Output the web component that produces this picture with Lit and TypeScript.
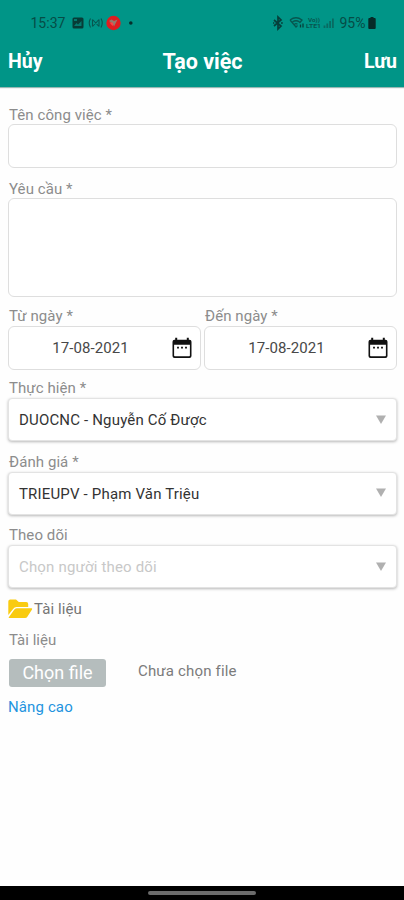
import { LitElement, html, css } from "lit";
import { customElement, property } from "lit/decorators.js";

const calendarIcon = html`<svg width="20" height="22" viewBox="0 0 20 22">
  <path d="M3.200 .7h2v2h9.600v-2h2v2h.7q2 0 2 2v14.300q0 2-2 2h-15q-2 0-2-2V4.700q0-2 2-2h.7zM2.100 7.800v10.600q0 .8.800.8h14.200q.8 0 .8-.8V7.800z" fill="#111" fill-rule="evenodd"/>
  <path d="M5 9.800h2v1.700H5zM9 9.800h2v1.700H9zM13 9.800h2v1.700h-2z" fill="#222"/>
</svg>`;

const folderIcon = html`<svg width="25" height="20" viewBox="0 0 25 20">
  <path d="M.3 16V2.500Q.3.500 2.300.500H8l2.800 2.500h7.400q2 0 2 2v3L8.500 8q-2 0-3.400 1.900z" fill="#f9cb10"/>
  <path d="M.8 18.200 6 11q1-1.700 2.700-1.700h14.700q1.300 0 .6 1.200l-4.500 7q-.9 1.600-2.500 1.600H1.300q-.9 0-.5-.9z" fill="#f9cb10"/>
</svg>`;

@customElement("status-bar")
export class StatusBar extends LitElement {
  static styles = css`
    :host { display: flex; height: 46px; box-sizing: border-box; padding: 14px 28px 14px 30.500px; color: #064c46; font-size: 14px; line-height: 18px; justify-content: space-between; }
    .side { display: flex; align-items: center; height: 18px; }
    .time { width: 41px; }
    .percent { margin-left: 5px; width: 28.500px; }
    svg { display: block; flex: none; }
  `;
  render() {
    return html`
      <div class="side">
        <span class="time">15:37</span>
        <svg width="62" height="18" viewBox="0 0 62 18">
          <path d="M2 3.500h8q1.500 0 1.500 1.500v8q0 1.500-1.500 1.500H2Q.5 14.500.5 13V5Q.5 3.500 2 3.500z" fill="#073c37"/>
          <path d="M2 5h3v2H2zM2 12l2.500-3L6 10.500 9.500 7v5z" fill="#05796e"/>
          <g fill="none" stroke="#07564f" stroke-width="1.100">
            <path d="M18.500 4.500Q16 9 18.500 13.500M29 4.500q2.500 4.500 0 9M20.500 5.500l6.500 7M27 5.500l-6.500 7M20.500 5.500v7M27 5.500v7"/>
          </g>
          <circle cx="41.500" cy="9" r="7.200" fill="#df1d20"/>
          <path d="M37 7l2.500-1.500L42 7l3.500-1.500-2 4-1.500 3-1.500-3z" fill="#96796b"/>
          <path d="M37.500 8.500h3l1 2-1 1.500z" fill="#f44"/>
          <circle cx="58.800" cy="9" r="1.800" fill="#062f2b"/>
        </svg>
      </div>
      <div class="side">
        <svg width="62" height="18" viewBox="0 0 62 18">
          <path d="M1 6l7 6-3 3V3l3 3-7 6" fill="none" stroke="#063f3a" stroke-width="1.700"/>
          <path d="M-.5 9h1.800M8 9h1.800" stroke="#063f3a" stroke-width="1.700"/>
          <g fill="none" stroke="#07564f" stroke-width="1.300">
            <path d="M17 6q6-4.500 12 0l-2.500 3M19.500 8q3.500-2.500 7 0M21.500 10.200q1.500-1 3 0M17 6l6 7 1.500-1.500"/>
          </g>
          <path d="M27.500 10.500v3M30 9.500v4" stroke="#063f3a" stroke-width="1.300"/>
          <text x="35" y="7.700" font-size="5.500" font-weight="700" fill="#07564f" textLength="12" lengthAdjust="spacingAndGlyphs">Vo))</text>
          <text x="33" y="14.300" font-size="5.500" font-weight="700" fill="#07564f" textLength="15" lengthAdjust="spacingAndGlyphs">LTE1</text>
          <path d="M51.500 11.500v2.500M54.300 9.500V14M57.100 7v7M59.900 4.500V14" stroke="#086a61" stroke-width="1.800"/>
        </svg>
        <span class="percent">95%</span>
        <svg width="8" height="18" viewBox="0 0 8 18">
          <path d="M2.500 3h3v1h1.200q1 0 1 1v9q0 1-1 1H1.300q-1 0-1-1V5q0-1 1-1h1.200z" fill="#062b28"/>
        </svg>
      </div>`;
  }
}

@customElement("form-field")
export class FormField extends LitElement {
  @property() label = "";
  @property() value = "";
  @property() placeholder = "";
  @property() kind = "text";
  static styles = css`
    :host { display: block; min-width: 0; }
    .label { height: 19px; line-height: var(--label-line, 19px); font-size: 15px; letter-spacing: .08px; color: #8c8c8c; padding-left: 1px; white-space: nowrap; }
    .box { box-sizing: border-box; height: 44px; border: 1px solid #dedede; border-radius: 6px; background: #fff; display: flex; align-items: center; font-size: 15px; color: #333; }
    .area { height: 99px; }
    .date { padding-right: 8px; }
    .date .value { flex: 1; text-align: center; color: #484848; letter-spacing: .08px; }
    .select { height: 43px; border-color: #e3e3e3; border-radius: 4px; box-shadow: 0 1px 3px rgba(0, 0, 0, .28); justify-content: space-between; padding: 1px 10px 0; letter-spacing: .17px; }
    .placeholder { color: #c8c8c8; }
    .arrow { width: 10px; height: 9px; margin-top: -2px; }
    svg { display: block; flex: none; }
  `;
  render() {
    return html`
      <div class="label">${this.label}</div>
      <div class="box ${this.kind}">
        ${this.kind === "date" ? html`<span class="value">${this.value}</span>${calendarIcon}` : ""}
        ${this.kind === "select"
          ? html`<span class=${this.value ? "value" : "placeholder"}>${this.value || this.placeholder}</span>
              <svg class="arrow" viewBox="0 0 10 9"><path d="M0 .5h10L5 9z" fill="#b0b0b0"/></svg>`
          : ""}
      </div>`;
  }
}

@customElement("app-root")
export class AppRoot extends LitElement {
  static styles = css`
    :host { display: flex; flex-direction: column; height: 900px; background: #fefefe; font-family: Roboto, "Noto Sans", sans-serif; overflow: hidden; }
    .top { flex: none; height: 87px; background: #009587; box-shadow: 0 1px 1px rgba(0, 80, 70, .4); }
    .bar { display: grid; grid-template-columns: 1fr auto 1fr; align-items: center; height: 30px; padding: 0 7px 0 8px; color: #fff; font-size: 19.500px; font-weight: 700; }
    .title { font-size: 21.500px; }
    .save { text-align: right; }
    .form { flex: 1; padding: 18px 7px 0 8px; }
    .name { margin-bottom: 11px; --label-line: 20px; }
    .request { margin-bottom: 10px; --label-line: 20px; }
    .dates { display: grid; grid-template-columns: 193px 193px; gap: 3px; margin-bottom: 9px; }
    .pick { margin-bottom: 11.500px; }
    .docs { display: flex; align-items: center; height: 20px; margin-top: -1px; font-size: 15px; color: #757575; gap: 1px; letter-spacing: .1px; }
    .sub { margin: 12px 0 9px 1px; height: 19px; line-height: 19px; font-size: 15px; color: #8c8c8c; }
    .file { display: flex; align-items: center; padding-left: 1px; gap: 32px; height: 28px; }
    .choose { width: 97px; height: 28px; line-height: 28px; border-radius: 3px; background: #b5bdbd; color: #fff; font-size: 18px; text-align: center; }
    .none { font-size: 15px; color: #7b7b7b; margin-top: -3px; letter-spacing: .17px; }
    .more { margin: 10px 0 0; height: 20px; line-height: 20px; font-size: 15px; letter-spacing: .12px; color: #2394de; }
    .nav { flex: none; height: 14px; background: #000; display: flex; justify-content: center; align-items: center; }
    .pill { width: 108px; height: 4px; border-radius: 2px; background: #6b6b6b; }
    svg { display: block; flex: none; }
  `;
  render() {
    return html`
      <header class="top">
        <status-bar></status-bar>
        <div class="bar"><span>Hủy</span><span class="title">Tạo việc</span><span class="save">Lưu</span></div>
      </header>
      <main class="form">
        <form-field class="name" label="Tên công việc *"></form-field>
        <form-field class="request" label="Yêu cầu *" kind="area"></form-field>
        <div class="dates">
          <form-field label="Từ ngày *" kind="date" value="17-08-2021"></form-field>
          <form-field label="Đến ngày *" kind="date" value="17-08-2021"></form-field>
        </div>
        <form-field class="pick" label="Thực hiện *" kind="select" value="DUOCNC - Nguyễn Cố Được"></form-field>
        <form-field class="pick" label="Đánh giá *" kind="select" value="TRIEUPV - Phạm Văn Triệu"></form-field>
        <form-field class="pick" label="Theo dõi" kind="select" placeholder="Chọn người theo dõi"></form-field>
        <div class="docs">${folderIcon}<span>Tài liệu</span></div>
        <div class="sub">Tài liệu</div>
        <div class="file"><span class="choose">Chọn file</span><span class="none">Chưa chọn file</span></div>
        <div class="more">Nâng cao</div>
      </main>
      <footer class="nav"><div class="pill"></div></footer>`;
  }
}
